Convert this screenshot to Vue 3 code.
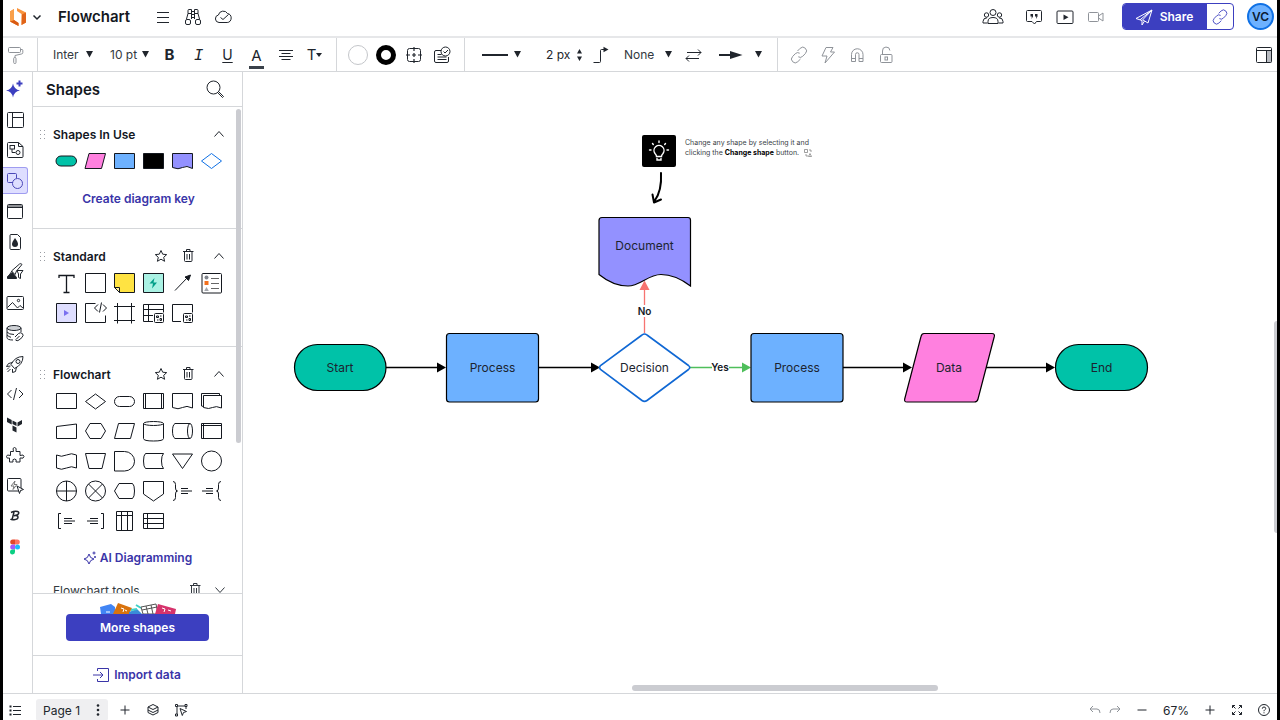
<script setup>
import { h } from 'vue'

const icons = {
  logo: '<path d="M1 4.500 5 2v11l4.500 3v3L1 14.500z" fill="#f57a1f" stroke="none"/><path d="M1 14.500 5 13l4.500 3V19z" fill="#d85a12" stroke="none"/><path d="M1 4.500 5 2v11l-4 1.500z" fill="#f9a04b" stroke="none"/><path d="M8 4V1l9 4.500v10L12.500 18V7z" fill="#f9943d" stroke="none"/><path d="M13 7.500 17 5.500v10L12.500 18z" fill="#e0641a" stroke="none"/>',
  chevDown: '<path d="m6.500 8.500 3.500 3.500 3.500-3.500" stroke-width="1.500"/>',
  chevUp: '<path d="m5.500 12.500 4.500-5 4.500 5"/>',
  chevThin: '<path d="m5.500 7.500 4.500 5 4.500-5"/>',
  menu: '<path d="M4 5.500h12M4 10.500h12M4 15.500h12"/>',
  binoculars: '<path d="M5 6.500V3.500q0-1 1-1h2.500v5M15 6.500V3.500q0-1-1-1h-2.500v5M8.500 4.500h3M8.500 7.500h3M8.500 10.500h3M5 6.500h3.500M11.500 6.500H15M5 6.500 3.500 12M8.500 7v5M11.500 7v5M15 6.500l1.500 5.500"/><rect x="2.500" y="12.500" width="5" height="5" rx="1.500"/><rect x="12.500" y="12.500" width="5" height="5" rx="1.500"/>',
  cloud: '<path d="M6 15.500a3.800 3.800 0 0 1-.6-7.500 5 5 0 0 1 9.200-1.400c2.200.2 3.600 2 3.600 4.300 0 2.700-1.700 4.600-4 4.600z"/><path d="m7.500 10.500 2.500 2 5.500-5"/>',
  people: '<g><circle cx="11" cy="6.500" r="3"/><circle cx="4.500" cy="9" r="2.200"/><circle cx="17.500" cy="9" r="2.200"/><path d="M6 17.500v-2q0-4 5-4t5 4v2zM5.500 17H1v-1.500q0-3.500 4-3.700M16.500 17H21v-1.500q0-3.500-4-3.700"/></g>',
  quote: '<path d="M3.500 3.500h13q1 0 1 1v9q0 1-1 1h-4L10.500 17 8 14.500H3.500q-1 0-1-1v-9q0-1 1-1z"/><path d="M6.500 7h2.500v2.500L7.500 12l.3-2.500H6.500zM11 7h2.500v2.500L12 12l.3-2.500H11z" fill="currentColor" stroke="none"/>',
  present: '<rect x="2" y="4" width="16" height="12.500" rx="1"/><path d="m8.500 7.500 5 2.800-5 2.800z" fill="currentColor" stroke="none"/>',
  camera: '<rect x="2.500" y="5.500" width="10" height="9" rx="1"/><path d="m12.500 9 4.500-3v8l-4.500-3"/>',
  plane: '<path d="m2 11.500 16-8.500-4 13-5-3M8 13.500V18l2.500-4M2 11.500l6 2L18 3 6 12.800"/>',
  link: '<path d="m8.500 6 2.700-2.700a3.600 3.600 0 0 1 5.200 5.200l-2.700 2.800a3.600 3.600 0 0 1-4.400.5M11.500 14l-2.700 2.700a3.600 3.600 0 0 1-5.200-5.200l2.700-2.800a3.600 3.600 0 0 1 4.400-.5"/>',
  roller: '<rect x="3.500" y="2.500" width="12" height="5" rx="1"/><path d="M15.500 4.500H17q.8 0 .8.8v2.400q0 1-1 1.200L10 10.500v2"/><rect x="8.700" y="12.500" width="2.300" height="6" rx="1"/>',
  alignIcon: '<path d="M3 5.500h14M5.500 8.500h9M3 11.500h14M5.500 14.500h9"/>',
  radius: '<rect x="3.500" y="3.500" width="13" height="13" rx="2"/><path d="M10 2v4M10 14v4M2 10h4M14 10h4M8 10h4M10 8v4" stroke-width="1.200"/>',
  cardCheck: '<path d="M9 5.500H4q-1.500 0-1.500 1.500v9q0 1.500 1.500 1.500h11q1.500 0 1.500-1.500v-4M5.500 9.500h4M5.500 12h9M5.500 14.500h9"/><circle cx="13.500" cy="6.500" r="4.500"/><path d="m11.500 6.500 1.500 1.500 3-3"/>',
  elbow: '<path d="M2.500 17.500h6q1 0 1-1V5.500q0-1 1-1H13"/><path d="M12.500 1.800 17.500 4.500l-5 2.700z" fill="currentColor" stroke="none"/>',
  swap: '<path d="M4 7.500h14M15 4.500l3 3-3 3M16 13.500H3M6 10.500l-3 3 3 3"/>',
  bolt: '<path d="M8 2.500h7L12.500 7h4L7 18l2-7H4z"/>',
  magnet: '<path d="M4.500 16.500v-7a5.500 5.500 0 0 1 11.500 0v7h-4v-7a1.700 1.700 0 0 0-3.500 0v7zM4.500 13.500h4M12 13.500h4"/>',
  lock: '<rect x="4.500" y="9.500" width="11.500" height="8" rx="1"/><path d="M6.500 9.500V6a3.700 3.700 0 0 1 7.400-.5"/><rect x="9" y="12" width="2.500" height="3"/>',
  dock: '<rect x="12.500" y="6" width="5" height="11.500" fill="#b9bcc2" stroke="none"/><rect x="2.500" y="2.500" width="15" height="15" rx="1"/><path d="M2.500 5.500h15M12.500 5.500v12"/>',
  sparkles: '<path d="M8 4.500q1 6 7 7-6 1-7 7-1-6-7-7 6-1 7-7z" fill="currentColor" stroke="none"/><path d="M14.500 1.500v6M11.500 4.500h6" stroke-width="2"/>',
  template: '<rect x="2.500" y="2.500" width="16" height="15" rx="1"/><path d="M7.500 2.500v15M7.500 7.500h11"/>',
  docFlow: '<path d="M2.500 3.500q0-1 1-1h10l4.500 4v10q0 1-1 1H3.500q-1 0-1-1zM13.500 2.500v4H18"/><rect x="5" y="5.500" width="4.500" height="3.500"/><path d="M7 9v3.500h3.500"/><circle cx="13" cy="12.500" r="2"/>',
  shapes: '<path d="M8 11.500H3.500q-1 0-1-1v-7q0-1 1-1h7q1 0 1 1V7"/><circle cx="12.500" cy="12.500" r="5"/>',
  container: '<rect x="2.500" y="3.500" width="15" height="14" rx="1"/><path d="M2.500 6.500h15M3 5h14"/>',
  drop: '<path d="M5 3.500q0-1 1-1h6.500l3 3V16.500q0 1-1 1H6q-1 0-1-1z"/><path d="M10 6q3 4 3 6a3 3 0 0 1-6 0q0-2 3-6z" fill="currentColor" stroke="none"/>',
  brush: '<path d="M2.500 16.500h9v-1l-4-5-5 4z" fill="currentColor"/><path d="m6.500 9 8-7q1.500-1 2.500.500L11.500 9l-1.500 3.500L6.500 9zM12 8.500h6l-2.500 3.500v4.500l-2-1V12z" fill="#fff"/><path d="M4 13.500 7 9"/>',
  image: '<rect x="2" y="3.500" width="16.500" height="13" rx="1"/><path d="m2.500 14.500 5-5 5 5.500 2.500-2.500 3 2.500"/><circle cx="13.500" cy="7.500" r="1.200"/>',
  database: '<ellipse cx="9" cy="5" rx="7" ry="2.500" fill="#cfd2d6"/><path d="M2 5v9.500q0 2.500 6 2.500M16 5v4M2 9q2 2.500 7 2.500M2 12q2 2 4 2.300"/><path d="m10 14 3.500-3.500q2-1.500 3.800 0t-.3 4L14 17q-2 1.500-3.500 0M14.500 13 11 16.500"/>',
  rocket: '<path d="M6 10.500q4-8 12-8 0 8-8.500 12zM7.500 8.500l-4 1-2 3 4-.5M11.500 13l-1 4.500-3 1v-3.500M2 15.500l2-2M2.500 18l3-3"/><circle cx="13" cy="7.500" r="2"/>',
  code: '<path d="m6.500 6-4 4 4 4M14 6l4 4-4 4M11.500 4l-3 12"/>',
  terra: '<path d="m2 2.500 4.700 2.500v4.500L2 7zM7.500 5.500l4 2V11l-4-2zM12.500 7.500l4.500-2.500v4L12.500 11.500zM7.500 10.500l4 2v5l-4-2z" fill="currentColor" stroke="none"/>',
  puzzle: '<path d="M5.500 6.500h3q-1.500-4 1-4t1.500 4h4v4q4-1.500 4 1t-4 1.500v4h-4q1-3-1.500-3t-1.500 3h-3.500v-4q-3 1-3-1.500t4-1z"/>',
  clickBolt: '<rect x="2.500" y="2.500" width="13.500" height="12.500" rx="1"/><path d="M10 5 6 10h3l-1 3.500 4-5H9z" stroke="#777"/><path d="m12 10 6.500 3.500-3 1-1 3z" fill="#fff"/>',
  scriptB: '<g stroke-width="1.500"><path d="M9 6 7 14M6 6.500q4-2 6.500-1t.2 3.200Q11 9.700 9 9.700q4-.5 4 1.500t-4 2.600q-2.500.3-3.500-.8"/></g>',
  figma: '<g stroke="none"><path d="M7.700 2.500H10v5H7.700a2.500 2.500 0 0 1 0-5z" fill="#e2492a"/><path d="M10 2.500h2.300a2.500 2.500 0 0 1 0 5H10z" fill="#ff7262"/><path d="M7.700 7.500H10v5H7.700a2.500 2.500 0 0 1 0-5z" fill="#a259ff"/><circle cx="12.500" cy="10" r="2.500" fill="#1abcfe"/><path d="M7.700 12.500H10V15a2.500 2.500 0 1 1-2.300-2.500z" fill="#0acf83"/></g>',
  search: '<circle cx="8.500" cy="8.500" r="6.500"/><path d="m13 14 4.500 4.500 1-1-4.500-4.500" />',
  star: '<path d="m10 4.500 1.700 3.700 4 .4-3 2.700.9 4-3.600-2.100-3.600 2.100.9-4-3-2.700 4-.4z"/>',
  trash: '<path d="M5 5.500h10.500M6.500 5.500v9q0 1 1 1h5.500q1 0 1-1v-9M8.500 5.500v-2h3.500v2M9 8v5.500M11.500 8v5.500"/>',
  grip: '<g fill="#9a9da3" stroke="none"><path d="M0 0h1v1H0zM4 0h1v1H4zM0 4h1v1H0zM4 4h1v1H4zM0 8h1v1H0zM4 8h1v1H4z"/></g>',
  aiSpark: '<path d="M6 4q.8 4.500 5 5-4.200.8-5 5-.8-4.200-5-5 4.200-.5 5-5zM11 1.500v3M9.500 3h3M12 6v2M11 7h2"/>',
  importBox: '<path d="M6.500 6V3.500h11v13h-11V14M2 10h10M9 7l3 3-3 3"/>',
  list: '<path d="M8 6.500h8M8 10.500h8M8 14.500h8"/><path d="M4.500 5.500h2v2h-2zM4.500 9.500h2v2h-2zM4.500 13.500h2v2h-2z" fill="currentColor" stroke="none"/>',
  dots: '<g fill="currentColor" stroke="none"><circle cx="10" cy="5.500" r="1.300"/><circle cx="10" cy="10" r="1.300"/><circle cx="10" cy="14.500" r="1.300"/></g>',
  plus: '<path d="M10 5.500v9M5.500 10h9"/>',
  minus: '<path d="M5.500 10h9"/>',
  layers: '<path d="m10 4.500 5 2.500-5 2.500L5 7zM5 10l5 2.500 5-2.500M5 12.500l5 2.500 5-2.500M5 7v5.500M15 7v5.500"/>',
  selectBox: '<path d="M6 6v10M6 6h9M15 6v3"/><path d="M4.500 4.500h2v2h-2zM14 4.500h2v2h-2zM4.500 14h2v2h-2z" fill="#fff"/><path d="m9 8.500 6.500 3-3 1-1.200 3z"/>',
  undo: '<path d="M8 6 5 9l3 3M5 9h7q3 0 3 4"/>',
  redo: '<path d="m12 6 3 3-3 3M15 9H8q-3 0-3 4"/>',
  expand: '<path d="M5.500 8V5.500H8M5.500 5.500 8.500 8.500M12 5.500h2.500V8M14.500 5.500l-3 3M5.500 12v2.500H8M5.500 14.500l3-3M14.500 12v2.500H12M14.500 14.500l-3-3"/>',
  help: '<circle cx="10" cy="10" r="5.500"/><path d="M8.300 8.700q0-1.700 1.700-1.700t1.700 1.500q0 .9-1 1.400-.7.400-.7 1.300M10 12.300v1"/>',
  // library shapes, 24 x 24
  fPill: '<rect x="2" y="7" width="20.500" height="10" rx="5" fill="#00c2a8"/>',
  fData: '<path d="M6 4.500h16.500l-4 15H2z" fill="#ff80df"/>',
  fProcess: '<path d="M2.500 4.500h20v15h-20z" fill="#6db1ff"/>',
  fBlack: '<path d="M2.500 4.500h20v15h-20z" fill="#000"/>',
  fDoc: '<path d="M2.500 4.500h20v15q-6-3.500-10-1t-10 0z" fill="#9391ff"/>',
  fDiamond: '<path d="m12.500 4.500 10 7.500-10 7.500-10-7.500z" stroke="#1071e5"/>',
  textT: '<path d="M5 7V4.500h15V7M12.500 4.500v17M9.500 21.500h6" stroke-width="1.300"/>',
  block: '<path d="M2.500 2.500h20v19h-20z"/>',
  note: '<path d="M2.500 2.500h20v19H7.500l-5-5z" fill="#ffe342"/><path d="M2.500 16.500h5v5z" fill="#fff29a"/>',
  action: '<path d="M2.500 2.500h20v19h-20z" fill="#aaf2e4"/><path d="m13.500 7-5 5.500h3.500l-1 5 5-6h-3.500z" fill="#009e88" stroke="none"/>',
  arrow: '<path d="M5 19.500 18 6"/><path d="m20.500 4-2 5.500-3.500-3.500z" fill="currentColor"/>',
  legend: '<rect x="3" y="2.500" width="19.500" height="19.500" rx="1"/><circle cx="7.500" cy="6.500" r="2" fill="#80848c" stroke="none"/><path d="M5.500 10h4v4h-4z" fill="#f2701d" stroke="none"/><path d="m7.500 16 2.300 4H5.200z" fill="#a3a6ac" stroke="none"/><path d="M12 7.500h8M12 12.500h8M12 17.500h8" stroke="#666"/>',
  video: '<path d="M2.500 2.500h20v19h-20z" fill="#dedeff"/><path d="m10 9 5 3-5 3z" fill="#7a70f0" stroke="none"/>',
  embed: '<path d="M12.500 2.500h-10v19h20v-7"/><path d="m15 3.500-3.500 3.500 3.500 3.500M20 3.500 23.500 7 20 10.500M18.500 1.500l-2 10"/>',
  frame: '<path d="M5.500 2v20.500M19.500 2v20.500M2 5.500h21M2 19.500h21"/>',
  tableData: '<path d="M12 20.500H2.500v-17h20v8M2.500 8.500h20M2.500 14.500H12M7.500 3.500v17"/><rect x="13.500" y="12.500" width="9" height="9" rx="1"/><path d="M15.500 15h2v1.500h-2zM19 15h1.500M16 19h1.500M19 17.500h1.500v2H19z"/>',
  cardData: '<path d="M11 20.500H2.500v-17h20v8"/><rect x="13.500" y="12.500" width="9" height="9" rx="1"/><path d="M15.500 15h2v1.500h-2zM19 15h1.500M16 19h1.500M19 17.500h1.500v2H19z"/>',
  process: '<path d="M2.500 4.500h20v15h-20z"/>',
  diamond: '<path d="m12.500 5 10 7.500-10 7.500-10-7.500z"/>',
  pill: '<rect x="2.500" y="7.500" width="20" height="10" rx="5"/>',
  predef: '<path d="M2.500 4.500h20v15h-20zM4.500 4.500v15M20.500 4.500v15"/>',
  doc: '<path d="M2.500 4.500h20V19q-6-3-10-.5t-10 0z"/>',
  multiDoc: '<path d="M4.500 6.500h18V19q-5.500-2.500-9-.5t-9 0zM4.500 17.500l-2-.5v-12.500h18v2"/>',
  manualIn: '<path d="M2.500 7.500 22.500 5v14.500h-20z"/>',
  hexagon: '<path d="M7 4.500h11l4.500 7.500-4.500 7.500H7L2.500 12z"/>',
  dataShape: '<path d="M6.500 4.500h16l-4 15h-16z"/>',
  cylinder: '<ellipse cx="12.500" cy="4.500" rx="10" ry="2"/><path d="M2.500 4.500v15q0 2.500 10 2.500t10-2.500v-15"/>',
  direct: '<path d="M20 4.500H5Q2.500 6 2.500 12T5 19.500h15"/><ellipse cx="20" cy="12" rx="2.500" ry="7.500"/>',
  internal: '<path d="M2.500 4.500h20v15h-20zM4.500 4.500v15M2.500 6.500h20"/>',
  tape: '<path d="M2.500 6q5 2.500 10 0t10 0v13q-5-2.500-10 0t-10 0z"/>',
  trapezoid: '<path d="M2.500 4.500h20l-3.500 15H6z"/>',
  delay: '<path d="M2.500 2.500h10a10 9.700 0 0 1 0 19.500h-10z"/>',
  stored: '<path d="M22.500 4.500H4.500q-2 1.500-2 7.500t2 7.500h18q-2-2-2-7.500t2-7.500z"/>',
  merge: '<path d="M2.500 5h20l-10 14.500z"/>',
  circle: '<circle cx="12.500" cy="12" r="10"/>',
  orShape: '<circle cx="12.500" cy="12" r="10"/><path d="M2.500 12h20M12.500 2v20"/>',
  sumShape: '<circle cx="12.500" cy="12" r="10"/><path d="m5.500 5 14 14M19.500 5l-14 14"/>',
  display: '<path d="M7 4.500h13.500q2 1.500 2 7.500t-2 7.500H7L2.500 12z"/>',
  offpage: '<path d="M2.500 2.500h20v12.500l-10 7-10-7z"/>',
  braceR: '<path d="M3 2.500q2.500 0 2.500 3V9q0 3 2 3-2 0-2 3v3.500q0 3-2.500 3"/><path d="M11 9.500h7M11 12h11M11 14.500h7"/>',
  braceL: '<path d="M22 2.500q-2.500 0-2.500 3V9q0 3-2 3 2 0 2 3v3.500q0 3 2.500 3"/><path d="M7 9.500h7M3 12h11M7 14.500h7"/>',
  bracketR: '<path d="M7 4.500H4.500v15H7M10 9.500h8M10 12h11M10 14.500h8"/>',
  bracketL: '<path d="M18 4.500h2.500v15H18M7 9.500h8M4 12h11M7 14.500h8"/>',
  tableV: '<path d="M4.500 2.500h16V21.500h-16zM4.500 6.500h16M9.500 2.500V21.500M15.500 2.500V21.500"/>',
  tableH: '<path d="M2.500 4.500h20v15h-20zM6.500 4.500V19.500M2.500 9.500h20M2.500 14.500h20"/>',
}

const Icon = (props) =>
  h('svg', {
    viewBox: `0 0 ${props.size} ${props.size}`,
    width: props.size,
    height: props.size,
    fill: 'none',
    stroke: 'currentColor',
    'stroke-width': 1,
    'aria-hidden': 'true',
    innerHTML: icons[props.name],
  })
Icon.props = { name: String, size: { type: Number, default: 20 } }

const Caret = () =>
  h('svg', { viewBox: '0 0 7 7', width: 7, height: 7, 'aria-hidden': 'true', innerHTML: '<path d="M0 0h7L3.500 6.500z" fill="#20252c"/>' })

const rail = [
  ['sparkles', 'AI'], ['template', 'Templates'], ['docFlow', 'Documents'], ['shapes', 'Shapes'],
  ['container', 'Containers'], ['drop', 'Themes'], ['brush', 'Styles'], ['image', 'Images'],
  ['database', 'Data'], ['rocket', 'Launch'], ['code', 'Code'], ['terra', 'Terraform'],
  ['puzzle', 'Plugins'], ['clickBolt', 'Actions'], ['scriptB', 'Brand'], ['figma', 'Figma'],
]
const inUse = ['fPill', 'fData', 'fProcess', 'fBlack', 'fDoc', 'fDiamond']
const standard = ['textT', 'block', 'note', 'action', 'arrow', 'legend', 'video', 'embed', 'frame', 'tableData', 'cardData']
const flow = [
  'process', 'diamond', 'pill', 'predef', 'doc', 'multiDoc',
  'manualIn', 'hexagon', 'dataShape', 'cylinder', 'direct', 'internal',
  'tape', 'trapezoid', 'delay', 'stored', 'merge', 'circle',
  'orShape', 'sumShape', 'display', 'offpage', 'braceR', 'braceL',
  'bracketR', 'bracketL', 'tableV', 'tableH',
]
</script>

<template>
  <div class="app">
    <header class="topbar">
      <button class="logo" aria-label="Home"><Icon name="logo" /></button>
      <button class="logo-menu" aria-label="Product menu"><Icon name="chevDown" /></button>
      <h1>Flowchart</h1>
      <nav class="doc-tools">
        <button aria-label="Menu"><Icon name="menu" /></button>
        <button aria-label="Find"><Icon name="binoculars" /></button>
        <button aria-label="Saved"><Icon name="cloud" /></button>
      </nav>
      <div class="collab">
        <button class="people" aria-label="Collaborators"><Icon name="people" :size="22" /></button>
        <button aria-label="Comments"><Icon name="quote" /></button>
        <button aria-label="Present"><Icon name="present" /></button>
        <button class="muted" aria-label="Record"><Icon name="camera" /></button>
      </div>
      <div class="share">
        <button class="share-main"><Icon name="plane" />Share</button>
        <button class="share-link" aria-label="Copy link"><Icon name="link" /></button>
      </div>
      <button class="avatar">VC</button>
    </header>

    <div class="toolbar">
      <div class="group g-paint">
        <button class="muted" aria-label="Format painter"><Icon name="roller" /></button>
      </div>
      <div class="group g-text">
        <label class="pick"><select aria-label="Font"><option>Inter</option></select><Caret /></label>
        <label class="pick pick-size"><select aria-label="Font size"><option>10 pt</option></select><Caret /></label>
        <div class="cells">
          <button class="t-bold" aria-label="Bold">B</button>
          <button class="t-italic" aria-label="Italic">I</button>
          <button class="t-under" aria-label="Underline">U</button>
          <button class="t-color" aria-label="Text colour"><span>A</span></button>
          <button aria-label="Align"><Icon name="alignIcon" /></button>
          <button class="t-more" aria-label="Text options">T<i></i></button>
        </div>
      </div>
      <div class="group g-fill">
        <button aria-label="Fill"><span class="dot dot-fill"></span></button>
        <button aria-label="Border"><span class="dot dot-border"></span></button>
        <button aria-label="Corner radius"><Icon name="radius" /></button>
        <button aria-label="Shape options"><Icon name="cardCheck" /></button>
      </div>
      <div class="group g-line">
        <button class="line-style" aria-label="Line style"><span class="rule"></span><Caret /></button>
        <div class="stepper">
          <input type="text" value="2 px" aria-label="Line width" />
          <svg viewBox="0 0 7 12" width="7" height="12"><path d="M1 4.500 3.500 0 6 4.500zM1 7.500h5L3.500 12z" fill="#20252c" /></svg>
        </div>
        <button class="elbow" aria-label="Line type"><Icon name="elbow" /></button>
        <label class="pick pick-end"><select aria-label="Line start"><option>None</option></select><Caret /></label>
        <button class="swap" aria-label="Swap ends"><Icon name="swap" /></button>
        <button class="line-end" aria-label="Line end">
          <svg viewBox="0 0 25 10" width="25" height="10"><path d="M1 5h12" stroke="#20252c" stroke-width="2" /><path d="m12 1 12.500 4L12 9z" fill="#20252c" /></svg>
          <Caret />
        </button>
      </div>
      <div class="group g-misc">
        <button class="muted" aria-label="Link"><Icon name="link" /></button>
        <button class="muted" aria-label="Action"><Icon name="bolt" /></button>
        <button class="muted" aria-label="Magnetize"><Icon name="magnet" /></button>
        <button class="muted" aria-label="Lock"><Icon name="lock" /></button>
      </div>
      <button class="dock" aria-label="Toggle panel"><Icon name="dock" /></button>
    </div>

    <main class="body">
      <nav class="rail">
        <button v-for="[name, label] in rail" :key="name" :class="name" :aria-label="label"><Icon :name="name" /></button>
      </nav>

      <aside class="panel">
        <div class="panel-head">
          <h2>Shapes</h2>
          <button aria-label="Search shapes"><Icon name="search" /></button>
        </div>
        <div class="library">
          <section class="in-use">
            <div class="sec-head">
              <Icon name="grip" :size="9" /><h3>Shapes In Use</h3>
              <button aria-label="Collapse"><Icon name="chevUp" /></button>
            </div>
            <div class="grid"><button v-for="n in inUse" :key="n" :aria-label="n"><Icon :name="n" :size="24" /></button></div>
            <a class="sec-link" href="#">Create diagram key</a>
          </section>
          <section class="std">
            <div class="sec-head">
              <Icon name="grip" :size="9" /><h3>Standard</h3>
              <button aria-label="Favourite"><Icon name="star" /></button>
              <button aria-label="Remove"><Icon name="trash" /></button>
              <button aria-label="Collapse"><Icon name="chevUp" /></button>
            </div>
            <div class="grid"><button v-for="n in standard" :key="n" :aria-label="n"><Icon :name="n" :size="24" /></button></div>
          </section>
          <section class="flow">
            <div class="sec-head">
              <Icon name="grip" :size="9" /><h3>Flowchart</h3>
              <button aria-label="Favourite"><Icon name="star" /></button>
              <button aria-label="Remove"><Icon name="trash" /></button>
              <button aria-label="Collapse"><Icon name="chevUp" /></button>
            </div>
            <div class="grid"><button v-for="n in flow" :key="n" :aria-label="n"><Icon :name="n" :size="24" /></button></div>
            <a class="sec-link sec-ai" href="#"><Icon name="aiSpark" :size="14" />AI Diagramming</a>
            <div class="tools-row">
              <span>Flowchart tools</span>
              <button aria-label="Remove"><Icon name="trash" /></button>
              <button aria-label="Expand"><Icon name="chevThin" /></button>
            </div>
          </section>
          <div class="thumb"></div>
        </div>
        <div class="more">
          <svg class="peek" viewBox="0 0 76 11" width="76" height="11" aria-hidden="true">
            <path d="M0 4 11 1l4 3v7H1z" fill="#4285f4" /><path d="M6 9h4" stroke="#fff" />
            <path d="m18 0 14 5-3 6H13z" fill="#d9730d" /><path d="m21 5 3 1-1 3M25 7l2 1" stroke="#fff" fill="none" />
            <path d="m29 9 8-3 5 5H29z" fill="#3a8bd8" /><path d="m36 2 5 3M31 7l6-1" stroke="#3fd0c8" stroke-width="2" fill="none" />
            <path d="M41 4 56 1l2 10H43zM42 7l15-3M46 3l2 8M51 2l2 9" fill="#fff" stroke="#555" />
            <path d="M58 1 76 6l-1 5H55z" fill="#d6336c" /><path d="m62 5 3 1-1 3M68 7l3 1" stroke="#fff" fill="none" />
          </svg>
          <button>More shapes</button>
        </div>
        <button class="import"><Icon name="importBox" />Import data</button>
      </aside>

      <div class="canvas">
        <svg class="diagram" viewBox="243 72 1034 621" width="1034" height="621">
          <rect x="642" y="135" width="34" height="32" rx="2" fill="#000" />
          <g stroke="#fff" fill="none" stroke-width="1.400" stroke-linecap="round">
            <path d="M656.500 156.500q0-1.500-1.500-3a5 5 0 1 1 8 0q-1.500 1.500-1.500 3zM657 158.500v1.500h4v-1.500M659 141v1.500M652.500 143.500l.8 1M665.500 143.500l-.8 1M649.500 150h1.500M667 150h1.500" />
          </g>
          <g class="note-text">
            <text x="685" y="145">Change any shape by selecting it and</text>
            <text x="685" y="155">clicking the <tspan class="strong">Change shape</tspan> button.</text>
          </g>
          <path d="M804.500 149.500h3v3h-3zM809 150h2v2M806 154v2h2M808.500 156.500l1.500-3 1.500 3z" fill="none" stroke="#777" stroke-width=".7" />
          <path d="M661 173q1 18-6.500 28M652.500 194.500l1.500 8 7-3" fill="none" stroke="#000" stroke-width="2" stroke-linecap="round" stroke-linejoin="round" />

          <g stroke="#000" stroke-width="1.300">
            <path d="M386 367.500h53M538.500 367.500H592M843 367.500h61M986 367.500h62" />
          </g>
          <path d="M437 362.500 446 367.500l-9 5zM591 362.500l9 5-9 5zM903 362.500l9 5-9 5zM1046 362.500l9 5-9 5z" fill="#000" />
          <path d="M644.500 333V288" stroke="#f77471" stroke-width="1.300" />
          <path d="m639.500 290 5-9.500 5 9.500z" fill="#f77471" />
          <path d="M690 367.500h53" stroke="#4fbf5b" stroke-width="1.300" />
          <path d="m742 362.500 9 5-9 5z" fill="#4fbf5b" />

          <g stroke="#000" stroke-width="1.200">
            <rect x="294.500" y="344.500" width="91.500" height="46" rx="23" fill="#00c2a8" />
            <rect x="446.500" y="333.500" width="92" height="68.500" rx="3" fill="#6db1ff" />
            <rect x="751" y="333.500" width="92" height="68.500" rx="3" fill="#6db1ff" />
            <path d="M924 333.500h68q3 0 2.300 3l-16.300 62.500q-.7 3-3.700 3H907q-3 0-2.300-3l16.300-62.500q.7-3 3-3z" fill="#ff80df" />
            <rect x="1055.500" y="344.500" width="92" height="46" rx="23" fill="#00c2a8" />
            <path d="M602 217.500h86q2.500 0 2.500 2.500V286C680 278 670 274.500 661 274.500 648 274.500 640 286 628 286 617 286 607 281 599 274.500V220.500q0-3 3-3z" fill="#9391ff" />
          </g>
          <path d="m647 335 41.500 30.500q2.500 2 0 4L647 400.500q-2.500 1.800-5 0L600.500 369.500q-2-2 0-4L642 335q2.500-2 5 0z" fill="#fff" stroke="#1068d4" stroke-width="1.600" />

          <rect x="636" y="305" width="17" height="12" fill="#fff" />
          <rect x="712" y="361" width="17" height="13" fill="#fff" />
          <g class="node-text">
            <text x="340" y="372">Start</text>
            <text x="492.500" y="372">Process</text>
            <text x="644.500" y="372">Decision</text>
            <text x="797" y="372">Process</text>
            <text x="949" y="372">Data</text>
            <text x="1101.500" y="372">End</text>
            <text x="644.500" y="250">Document</text>
          </g>
          <g class="edge-text">
            <text x="644.500" y="315">No</text>
            <text x="720" y="371">Yes</text>
          </g>
        </svg>
        <div class="hbar"></div>
        <div class="vbar"></div>
      </div>
    </main>

    <footer class="status">
      <button aria-label="Pages"><Icon name="list" /></button>
      <div class="page-tab"><button>Page 1</button><button class="kebab" aria-label="Page options"><Icon name="dots" /></button></div>
      <div class="page-tools">
        <button aria-label="Add page"><Icon name="plus" /></button>
        <button aria-label="Layers"><Icon name="layers" /></button>
        <button aria-label="Select"><Icon name="selectBox" /></button>
      </div>
      <div class="zoom">
        <button class="muted hist" aria-label="Undo"><Icon name="undo" /></button>
        <button class="muted hist" aria-label="Redo"><Icon name="redo" /></button>
        <button class="out" aria-label="Zoom out"><Icon name="minus" /></button>
        <button class="pct">67%</button>
        <button aria-label="Zoom in"><Icon name="plus" /></button>
        <button class="full" aria-label="Fullscreen"><Icon name="expand" /></button>
        <button class="help" aria-label="Help"><Icon name="help" /></button>
      </div>
    </footer>
  </div>
</template>

<style>
body { margin: 0; background: #fff; }
</style>

<style scoped>
* { box-sizing: border-box; }
.app {
  height: 100vh;
  display: flex;
  flex-direction: column;
  border: solid #000;
  border-width: 0 3px;
  background: #fff;
  color: #20252c;
  font-family: Inter, "Liberation Sans", sans-serif;
  font-size: 12px;
  overflow: hidden;
}
button, select, input {
  font: inherit;
  color: inherit;
  background: none;
  border: 0;
  padding: 0;
  margin: 0;
  border-radius: 0;
  outline: 0;
}
button { display: inline-flex; align-items: center; justify-content: center; flex: none; cursor: pointer; }
svg { flex: none; display: block; }
h1, h2, h3 { margin: 0; font-weight: 600; color: #14181f; }
a { color: #3a35a8; text-decoration: none; }
.muted { color: #8f9399; }

.topbar { flex: none; height: 38px; padding-bottom: 3px; border-bottom: 2px solid #e6e7e9; display: flex; align-items: center; }
.logo { margin-left: 6px; width: 20px; }
.logo-menu { width: 16px; margin-right: 13px; }
h1 { font-size: 15px; line-height: 20px; width: 90px; white-space: nowrap; }
.doc-tools { display: flex; }
.doc-tools button { width: 30px; }
.collab { margin-left: auto; display: flex; margin-right: 11px; }
.collab button { width: 31px; }
.collab .people { width: 50px; }
.share { display: flex; height: 27px; border: 1px solid #3c3fc0; border-radius: 4px; margin-right: 13px; overflow: hidden; }
.share-main { width: 84px; padding-right: 3px; background: #3c3fc0; color: #fff; font-weight: 600; gap: 6px; }
.share-link { width: 26px; color: #3c3fc0; }
.share-link svg { width: 18px; height: 18px; }
.avatar { width: 27px; height: 27px; border: 2px solid #1071e5; border-radius: 50%; background: #6db1ff; color: #0b1b33; font-weight: 600; font-size: 12px; margin-right: 3px; }

.toolbar { flex: none; height: 34px; border-bottom: 1px solid #d5d7da; display: flex; }
.group { flex: none; display: flex; align-items: center; border-right: 1px solid #d5d7da; }
.g-paint { width: 35px; }
.g-paint button { width: 24px; }
.g-text { width: 299px; padding-left: 15px; }
.pick { display: flex; align-items: center; color: #333940; margin-right: 17px; }
.pick select { appearance: none; width: 33px; line-height: 18px; }
.pick-size { margin-right: 6px; }
.pick-size select { width: 32px; }
.cells { display: flex; }
.cells button { width: 29px; height: 24px; font-size: 15px; }
.cells .t-bold { font-weight: 700; }
.cells .t-italic { font-family: "Liberation Mono", monospace; font-style: italic; font-size: 16px; line-height: 24px; padding-top: 2px; }
.cells .t-under { font-size: 14px; text-decoration: underline; text-underline-offset: 2px; }
.t-color span { border-bottom: 3px solid #3a414a; width: 15px; line-height: 20px; margin-top: 6px; }
.t-more i { border: 3px solid transparent; border-top: 4px solid #20252c; border-bottom: 0; }
.g-fill { width: 128px; padding-left: 7px; }
.g-fill button { width: 28px; }
.dot { width: 20px; height: 20px; border-radius: 50%; border: 1px solid #c4c6ca; }
.dot-border { border: 5px solid #000; }
.g-line { width: 313px; padding-left: 17px; }
.line-style { gap: 6px; margin-right: 25px; }
.rule { width: 26px; height: 2px; background: #20252c; }
.stepper { display: flex; align-items: center; margin-right: 8px; }
.stepper input { width: 30px; }
.elbow { margin-right: 13px; }
.pick-end { margin-right: 11px; }
.pick-end select { width: 41px; }
.swap { margin-right: 15px; }
.line-end { gap: 12px; }
.g-misc { border: 0; padding-left: 6px; }
.g-misc button { width: 29px; }
.dock { margin-left: auto; margin-right: 3px; }

.body { flex: 1; min-height: 0; display: flex; }
.rail { flex: none; width: 29px; height: 488px; margin-top: 2px; display: grid; grid-template-rows: repeat(16, 1fr); justify-items: start; align-items: center; }
.rail button { width: 25px; height: 27px; padding-right: 1px; }
.rail .sparkles { color: #3c3fc0; }
.rail .shapes { background: #dedeff; border: 1px solid #9f9cf0; border-left: 0; border-radius: 0 3px 3px 0; color: #4b48b8; }

.panel { flex: none; width: 211px; border: solid #d5d7da; border-width: 0 1px; display: flex; flex-direction: column; }
.panel-head { flex: none; height: 35px; border-bottom: 1px solid #d5d7da; display: flex; align-items: center; justify-content: space-between; padding: 0 17px 0 13px; }
h2 { font-size: 15px; }
.library { flex: 1; min-height: 0; overflow: hidden; position: relative; }
.thumb { position: absolute; right: 1px; top: 2px; width: 5px; height: 334px; border-radius: 3px; background: #cbccd1; }
section { border-bottom: 1px solid #d5d7da; padding-top: 15px; }
.in-use { padding-bottom: 8px; }
.std { padding-bottom: 18px; }
.sec-head { height: 24px; display: flex; align-items: center; padding: 0 10px 0 7px; }
h3 { flex: 1; font-size: 12px; margin-left: 4px; white-space: nowrap; }
.sec-head button { width: 27px; }
.sec-head button:last-child { width: 26px; margin-left: 5px; }
.grid { display: grid; grid-template-columns: repeat(6, 29px); grid-auto-rows: 30px; padding-left: 18px; color: #14181f; }
.sec-link { height: 44px; display: flex; align-items: center; justify-content: center; gap: 3px; padding-left: 2px; font-weight: 600; }
.sec-ai { height: 42px; padding-left: 0; }
.tools-row { height: 24px; display: flex; align-items: center; padding: 0 10px 0 20px; color: #333940; }
.tools-row span { flex: 1; }
.tools-row button { width: 25px; }
.more { flex: none; height: 62px; border-top: 1px solid #d5d7da; display: flex; flex-direction: column; align-items: center; padding-top: 9px; }
.more button { width: 143px; height: 27px; border-radius: 4px; background: #3c3fc0; color: #fff; font-weight: 600; }
.import { height: 38px; border-top: 1px solid #d5d7da; padding-right: 3px; color: #3a35a8; font-weight: 600; gap: 3px; }

.canvas { flex: 1; min-width: 0; position: relative; overflow: hidden; }
.hbar { position: absolute; left: 389px; bottom: 2px; width: 306px; height: 6px; border-radius: 3px; background: #cbccd1; }
.vbar { position: absolute; right: 0; top: 249px; width: 3px; height: 212px; border-radius: 3px 0 0 3px; background: #cbccd1; }
.node-text { font-size: 12px; text-anchor: middle; fill: #1c2430; }
.edge-text { font-size: 10px; font-weight: 600; text-anchor: middle; fill: #14181f; }
.note-text { font-size: 7px; fill: #3a3f47; }
.strong { font-weight: 700; fill: #000; }

.status { flex: none; height: 27px; border-top: 1px solid #d5d7da; display: flex; align-items: center; padding: 6px 3px 0 2px; }
.status button { height: 22px; }
.page-tab { display: flex; background: #efeff1; border-radius: 3px; margin: 0 3px 0 11px; padding-left: 7px; width: 72px; justify-content: space-between; }
.page-tools { display: flex; }
.page-tools button { width: 28px; }
.zoom { margin-left: auto; display: flex; align-items: center; }
.zoom button { width: 27px; }
.zoom .hist { width: 20px; }
.zoom .out { width: 28px; margin-left: 3px; }
.zoom .pct { width: 40px; }
.zoom .full { width: 28px; }
.zoom .help { width: 20px; margin-left: 3px; }
</style>
